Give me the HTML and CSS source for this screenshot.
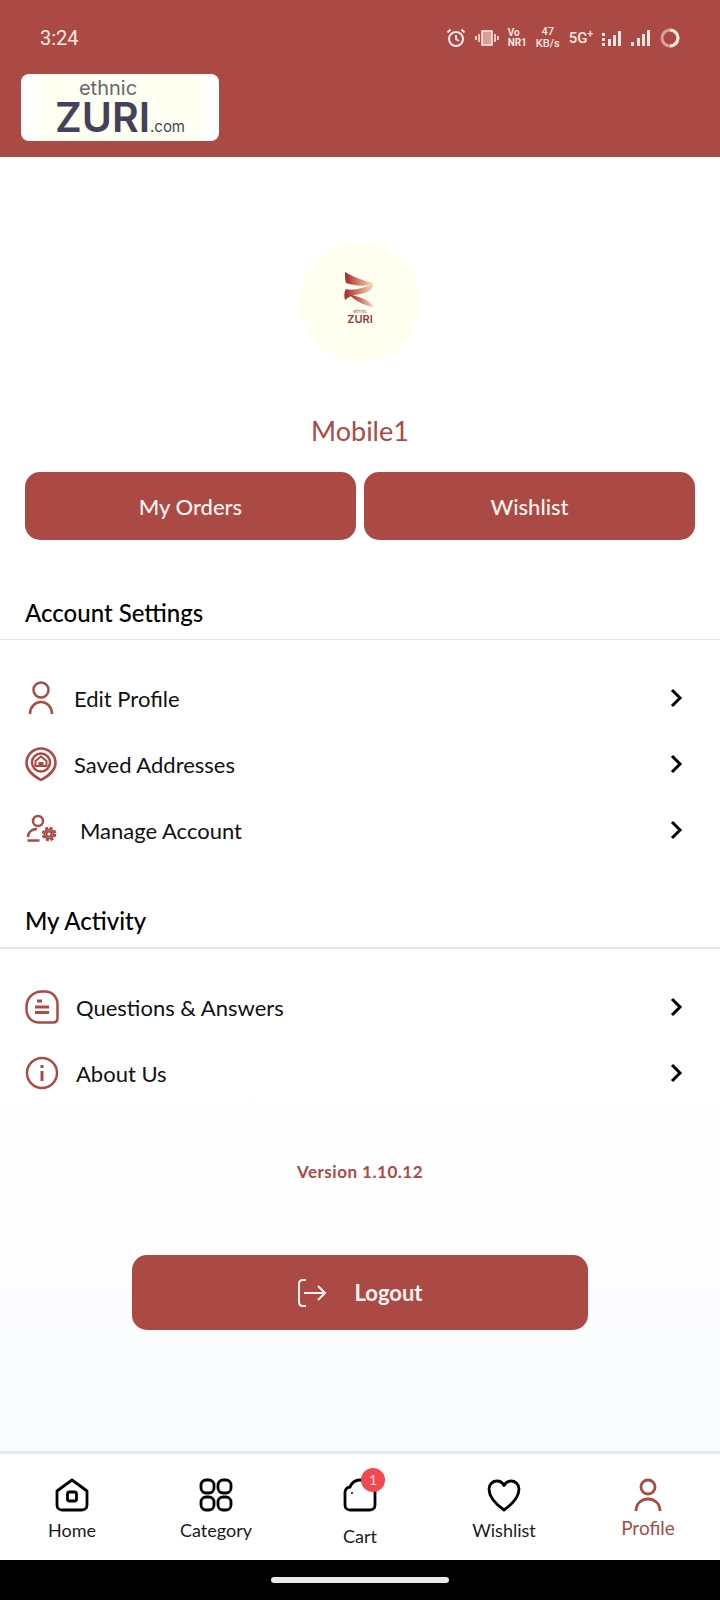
FILE: index.html
```html
<!DOCTYPE html>
<html lang="en">

<head>
  <meta charset="UTF-8">
  <title>Profile</title>
  <link rel="stylesheet" href="styles.css">
</head>

<body>
  <div class="page">
    <header class="app-header">
      <div class="status-bar">
        <span class="time">3:24</span>
        <div class="status-icons">
          <svg class="st-alarm" width="20" height="20" viewBox="0 0 20 20" fill="none" stroke="#f8e6e2" stroke-width="2">
            <circle cx="10" cy="11" r="7" />
            <path d="M10 7v4l3 2M1.500 4.500l3-3M18.500 4.500l-3-3" />
          </svg>
          <svg class="st-vibrate" width="24" height="16" viewBox="0 0 24 16" fill="none" stroke="#f8e6e2" stroke-width="1.600">
            <rect x="7" y="1" width="10" height="14" fill="#d99f9a" />
            <path d="M4 4v8M20 4v8M1 6v4M23 6v4" />
          </svg>
          <span class="st-vonr">Vo<br>NR1</span>
          <span class="st-speed">47<br>KB/s</span>
          <span class="st-5g">5G<sup>+</sup></span>
          <svg class="st-signal" width="20" height="16" viewBox="0 0 20 16" fill="#f8e6e2">
            <rect x="0" y="3" width="3" height="3" />
            <rect x="0" y="8" width="3" height="3" />
            <rect x="0" y="13" width="3" height="3" />
            <rect x="6" y="9" width="3" height="7" />
            <rect x="11" y="5" width="3" height="11" />
            <rect x="16" y="1" width="3" height="15" />
          </svg>
          <svg class="st-signal" width="20" height="16" viewBox="0 0 20 16" fill="#f8e6e2">
            <rect x="0" y="12" width="3" height="4" />
            <rect x="6" y="8" width="3" height="8" />
            <rect x="11" y="4" width="3" height="12" />
            <rect x="16" y="0" width="3" height="16" />
          </svg>
          <svg class="st-circle" width="20" height="20" viewBox="0 0 20 20" fill="none">
            <circle cx="10" cy="10" r="8" stroke="#d99f9a" stroke-width="3" />
            <path d="M10 2a8 8 0 0 1 0 16" stroke="#f8e6e2" stroke-width="3" />
          </svg>
        </div>
      </div>
      <div class="brand">
        <div class="brand-inner">
          <span class="brand-ethnic">ethnic</span>
          <span class="brand-zuri">ZURI<small>.com</small></span>
        </div>
      </div>
    </header>

    <main class="content">
      <section class="profile-top">
        <div class="avatar">
          <svg width="32" height="36" viewBox="0 0 32 36">
            <defs>
              <linearGradient id="ribbon" x1="0" y1="0" x2="1" y2="0">
                <stop offset="0" stop-color="#a5262c" />
                <stop offset="0.550" stop-color="#d88a72" />
                <stop offset="1" stop-color="#f3d9c0" />
              </linearGradient>
            </defs>
            <path d="M1 0c6 3 12 7 28 11C24 16 8 13 2 11 1 7 1 4 1 0z" fill="url(#ribbon)" />
            <path d="M29 11c1 6-3 9-13 11-6 1-12 3-15 6-1-4-1-8 1-11 7 2 20-1 27-6z" fill="url(#ribbon)" />
            <path d="M6 23c8 1 18 4 24 12-8-1-18-5-24-12z" fill="url(#ribbon)" />
          </svg>
          <span class="avatar-ethnic">ethnic</span>
          <span class="avatar-zuri">ZURI</span>
        </div>
        <div class="user-name">Mobile1</div>
        <div class="top-buttons">
          <button class="btn">My Orders</button>
          <button class="btn">Wishlist</button>
        </div>
      </section>

      <h2 class="section-title">Account Settings</h2>
      <ul class="menu">
        <li class="menu-row">
          <svg class="menu-icon" width="32" height="34" viewBox="0 0 32 34" fill="none" stroke="#ab4a45" stroke-width="2.500">
            <circle cx="16" cy="9" r="7.500" />
            <path d="M5 33c0-7 5-12 11-12s11 5 11 12" />
          </svg>
          <span class="menu-label">Edit Profile</span>
          <svg class="chevron" width="14" height="20" viewBox="0 0 14 20" fill="none" stroke="#000" stroke-width="3">
            <path d="M2 2l8 8-8 8" />
          </svg>
        </li>
        <li class="menu-row">
          <svg class="menu-icon" width="32" height="34" viewBox="0 0 32 34" fill="none" stroke="#ab4a45" stroke-width="2.500">
            <path d="M16 33C9 29 1.500 24 1.500 16a14.500 14.500 0 0 1 29 0C30.500 24 23 29 16 33z" />
            <circle cx="16" cy="15.500" r="9" />
            <path d="M10.500 19v-5L16 9.500l5.500 4.500v5z" stroke-width="2" />
            <rect x="13.500" y="15" width="5" height="4" fill="#ab4a45" stroke="none" />
          </svg>
          <span class="menu-label">Saved Addresses</span>
          <svg class="chevron" width="14" height="20" viewBox="0 0 14 20" fill="none" stroke="#000" stroke-width="3">
            <path d="M2 2l8 8-8 8" />
          </svg>
        </li>
        <li class="menu-row">
          <svg class="menu-icon" width="32" height="34" viewBox="0 0 32 34" fill="none" stroke="#ab4a45" stroke-width="2.500">
            <circle cx="13" cy="8" r="5" />
            <path d="M3 24c0-5 4-8 9-8M2.500 27.500h12" />
            <circle cx="24" cy="21" r="2.500" stroke-width="2" />
            <circle cx="24" cy="21" r="6" stroke-width="2.500" stroke-dasharray="3 1.700" />
            <circle cx="24" cy="21" r="4.500" stroke-width="2" />
          </svg>
          <span class="menu-label menu-label-manage">Manage Account</span>
          <svg class="chevron" width="14" height="20" viewBox="0 0 14 20" fill="none" stroke="#000" stroke-width="3">
            <path d="M2 2l8 8-8 8" />
          </svg>
        </li>
      </ul>

      <h2 class="section-title section-activity">My Activity</h2>
      <ul class="menu">
        <li class="menu-row">
          <svg class="menu-icon" width="34" height="34" viewBox="0 0 34 34" fill="none" stroke="#ab4a45" stroke-width="2.500">
            <path d="M17 1.500h3C27 1.500 32.500 7 32.500 14v14c0 3-1.500 4.500-4.500 4.500H14C7 32.500 1.500 27 1.500 20v-3C1.500 8 8 1.500 17 1.500z" />
            <path d="M12 11h5M10 17h14M10 22.500h14" stroke-width="3" />
          </svg>
          <span class="menu-label">Questions &amp; Answers</span>
          <svg class="chevron" width="14" height="20" viewBox="0 0 14 20" fill="none" stroke="#000" stroke-width="3">
            <path d="M2 2l8 8-8 8" />
          </svg>
        </li>
        <li class="menu-row">
          <svg class="menu-icon" width="34" height="34" viewBox="0 0 34 34" fill="none" stroke="#ab4a45" stroke-width="2.500">
            <circle cx="17" cy="17" r="15" />
            <path d="M17 15v10" stroke-width="3" />
            <path d="M17 9v3" stroke-width="3" />
          </svg>
          <span class="menu-label">About Us</span>
          <svg class="chevron" width="14" height="20" viewBox="0 0 14 20" fill="none" stroke="#000" stroke-width="3">
            <path d="M2 2l8 8-8 8" />
          </svg>
        </li>
      </ul>

      <div class="version">Version 1.10.12</div>

      <button class="btn btn-logout">
        <svg width="30" height="28" viewBox="0 0 30 28" fill="none" stroke="#fdf3f0" stroke-width="2">
          <path d="M9 1H6C3 1 2 3 2 5v18c0 2 1 4 4 4h3" />
          <path d="M7 14h21M21 7l7 7-7 7" />
        </svg>
        <span>Logout</span>
      </button>
    </main>

    <nav class="bottom-nav">
      <div class="nav-item">
        <svg width="34" height="34" viewBox="0 0 34 34" fill="none" stroke="#000" stroke-width="2.800" stroke-linejoin="round">
          <path d="M2 13L17 2l15 11v14c0 3-2 5-5 5H7c-3 0-5-2-5-5z" />
          <rect x="12.500" y="14" width="9" height="9" rx="2" />
        </svg>
        <span class="nav-label">Home</span>
      </div>
      <div class="nav-item">
        <svg width="34" height="34" viewBox="0 0 34 34" fill="none" stroke="#000" stroke-width="2.800">
          <rect x="2" y="2" width="13" height="13" rx="5" />
          <rect x="19" y="2" width="13" height="13" rx="5" />
          <rect x="2" y="19" width="13" height="13" rx="5" />
          <rect x="19" y="19" width="13" height="13" rx="5" />
        </svg>
        <span class="nav-label">Category</span>
      </div>
      <div class="nav-item nav-cart">
        <div class="cart-wrap">
          <svg width="34" height="34" viewBox="0 0 34 34" fill="none" stroke="#000" stroke-width="2.800">
            <path d="M2 14c0-3 3-5 5-5 2-5 5-7 10-7s8 2 10 7c3 0 5 2 5 5v13c0 3-2 5-5 5H7c-3 0-5-2-5-5z" />
            <circle cx="9" cy="15" r="1" fill="#000" stroke="none" />
          </svg>
          <span class="badge">1</span>
        </div>
        <span class="nav-label">Cart</span>
      </div>
      <div class="nav-item">
        <svg width="34" height="34" viewBox="0 0 34 34" fill="none" stroke="#000" stroke-width="2.800" stroke-linejoin="round">
          <path d="M17 32C10 27 2 20 2 11c0-5 4-8 8-8 3 0 5.500 1.500 7 4.500C18.500 4.500 21 3 24 3c4 0 8 3 8 8 0 9-8 16-15 21z" />
        </svg>
        <span class="nav-label">Wishlist</span>
      </div>
      <div class="nav-item nav-active">
        <svg width="34" height="34" viewBox="0 0 34 34" fill="none" stroke="#ab4a45" stroke-width="2.800">
          <circle cx="17" cy="9" r="7" />
          <path d="M5 33c0-7 5-12 12-12s12 5 12 12" />
        </svg>
        <span class="nav-label">Profile</span>
      </div>
    </nav>

    <div class="system-bar">
      <span class="home-pill"></span>
    </div>
  </div>
</body>

</html>
```

FILE: styles.css
```css
* {
  box-sizing: border-box;
}

body {
  margin: 0;
  font-family: "Lato", "Liberation Sans", sans-serif;
  background: #fff;
}

.page {
  width: 720px;
  height: 1600px;
  display: flex;
  flex-direction: column;
  overflow: hidden;
}

/* header */

.app-header {
  height: 157px;
  background-color: #ab4a45;
  padding: 24px 0 0 21px;
}

.status-bar {
  display: flex;
  justify-content: space-between;
  align-items: center;
  height: 28px;
  padding: 0 40px 0 19px;
}

.time {
  font-family: "Roboto", sans-serif;
  font-size: 20px;
  color: #fbe9e5;
}

.status-icons {
  display: flex;
  align-items: center;
  gap: 9px;
  color: #f8e6e2;
  font-family: "Roboto", sans-serif;
}

.st-vonr {
  font-size: 10px;
  line-height: 10px;
  font-weight: 700;
}

.st-speed {
  font-size: 11px;
  line-height: 12px;
  font-weight: 500;
  text-align: center;
}

.st-5g {
  font-size: 15px;
  font-weight: 500;
}

.st-5g sup {
  font-size: 10px;
  line-height: 0;
}

.brand {
  width: 198px;
  height: 67px;
  margin-top: 22px;
  background: #fff;
  border-radius: 8px;
  padding: 0 16px;
}

.brand-inner {
  height: 67px;
  background: #fffff2;
  display: flex;
  flex-direction: column;
  align-items: center;
  color: #43425a;
  font-family: "Inter", sans-serif;
}

.brand-ethnic {
  font-size: 20px;
  line-height: 22px;
  color: #66666c;
  margin: 3px 0 0 -24px;
}

.brand-zuri {
  font-size: 41px;
  line-height: 36px;
  font-weight: 600;
  white-space: nowrap;
}

.brand-zuri small {
  font-size: 15px;
  font-weight: 400;
}

/* profile block */

.content {
  flex: 1;
  background: linear-gradient(#fff 70%, #fafbfd);
}

.profile-top {
  display: flex;
  flex-direction: column;
  align-items: center;
  padding: 85px 25px 0;
}

.avatar {
  width: 120px;
  height: 120px;
  border-radius: 50%;
  background: #fffff0;
  display: flex;
  flex-direction: column;
  align-items: center;
  padding-top: 30px;
}

.avatar-ethnic {
  font-size: 5px;
  line-height: 5px;
  color: #8d6a66;
  margin-top: 1px;
}

.avatar-zuri {
  font-family: "Inter", sans-serif;
  font-size: 11px;
  line-height: 10px;
  font-weight: 600;
  color: #9a3a3a;
}

.user-name {
  margin-top: 53px;
  font-size: 27px;
  line-height: 32px;
  color: #ab4a45;
}

.top-buttons {
  display: flex;
  gap: 8px;
  width: 100%;
  margin-top: 25px;
}

.btn {
  flex: 1;
  height: 68px;
  border: none;
  border-radius: 15px;
  background-color: #ab4a45;
  color: #fdf3f0;
  font-family: inherit;
  font-size: 22px;
  font-weight: 500;
}

/* menus */

.section-title {
  margin: 57px 0 0;
  padding: 0 25px 10px;
  font-size: 24px;
  line-height: 32px;
  font-weight: 500;
  color: #000;
  border-bottom: 1px solid #e2e4e8;
}

.section-activity {
  margin-top: 42px;
  border-bottom: 2px solid #e2e6ec;
}

.menu {
  list-style: none;
  margin: 0;
  padding: 25px 0 0;
}

.menu-row {
  display: flex;
  align-items: center;
  height: 66px;
  padding: 0 36px 0 25px;
}

.menu-icon {
  flex-shrink: 0;
}

.menu-label {
  flex: 1;
  margin-left: 17px;
  font-size: 22px;
  color: #111;
}

.menu-label-manage {
  margin-left: 23px;
}

.version {
  margin-top: 55px;
  text-align: center;
  font-size: 17px;
  line-height: 22px;
  font-weight: 700;
  letter-spacing: 0.5px;
  color: #ab4a45;
}

.btn-logout {
  display: flex;
  align-items: center;
  justify-content: center;
  gap: 27px;
  width: 456px;
  height: 75px;
  margin: 72px auto 0;
  font-weight: 700;
}

/* bottom nav */

.bottom-nav {
  display: flex;
  height: 109px;
  background: #fff;
  border-top: 3px solid #e2e8f2;
}

.nav-item {
  flex: 1;
  display: flex;
  flex-direction: column;
  align-items: center;
  padding-top: 24px;
}

.nav-label {
  margin-top: 6px;
  font-size: 18px;
  line-height: 24px;
  color: #1a1a1a;
}

.nav-cart .nav-label {
  margin-top: 12px;
}

.nav-active .nav-label {
  margin-top: 4px;
  font-size: 19px;
  color: #ab4a45;
}

.cart-wrap {
  position: relative;
  height: 34px;
}

.badge {
  position: absolute;
  top: -10px;
  right: -8px;
  width: 24px;
  height: 24px;
  border-radius: 50%;
  background: #f4474f;
  color: #ffe3e3;
  font-size: 14px;
  line-height: 24px;
  text-align: center;
}

.system-bar {
  height: 40px;
  background: #000;
  display: flex;
  justify-content: center;
  padding-top: 17px;
}

.home-pill {
  width: 178px;
  height: 6px;
  border-radius: 3px;
  background: #e8e8e8;
}
```
